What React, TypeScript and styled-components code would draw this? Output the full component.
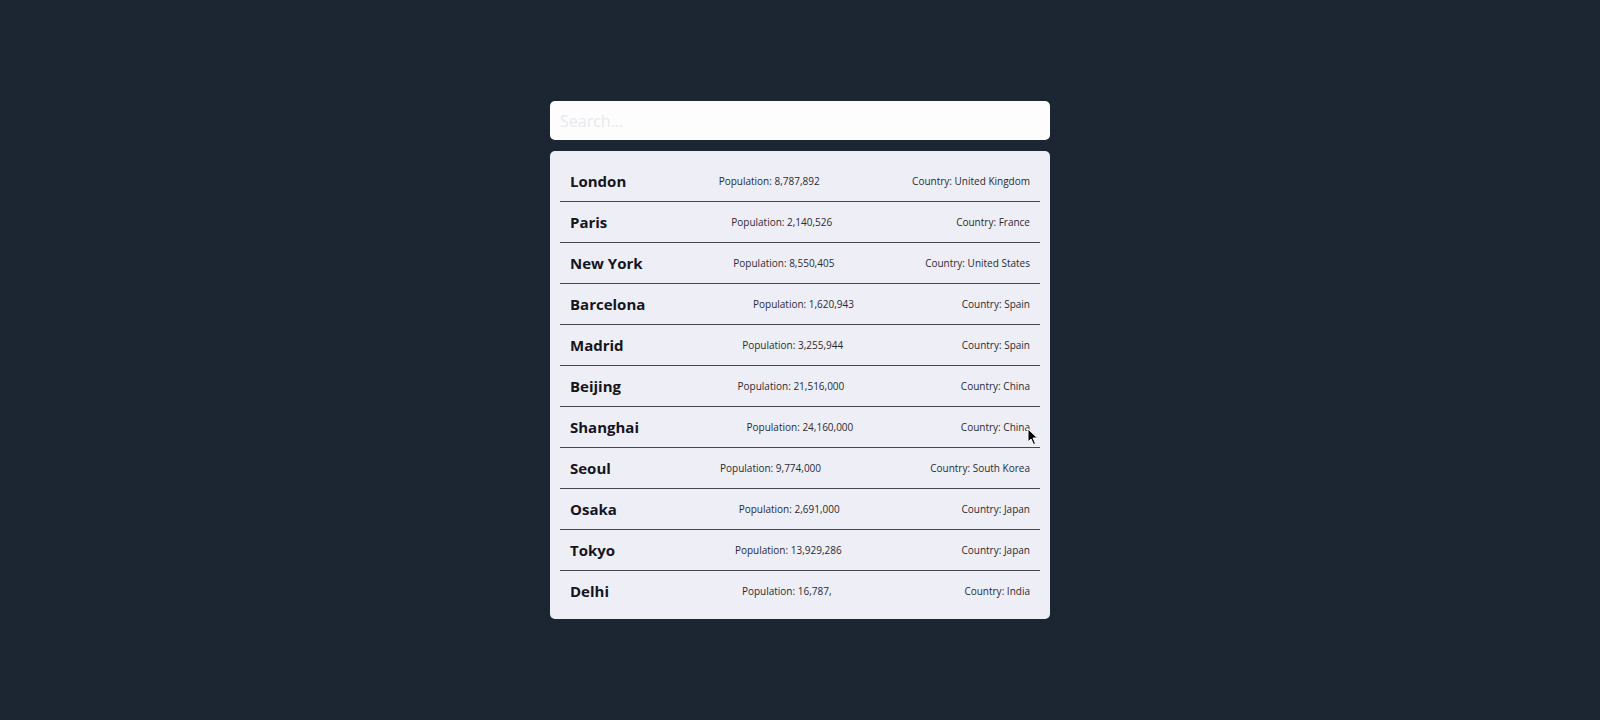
import React from "react";
import styled, { createGlobalStyle } from "styled-components";

const GlobalStyle = createGlobalStyle`
  html, body {
    margin: 0;
    padding: 0;
    background: #1c2632;
    font-family: "Open Sans", "Noto Sans", sans-serif;
  }
`;

const Page = styled.div`
  min-height: 720px;
  box-sizing: border-box;
  padding-top: 101px;
  display: flex;
  justify-content: center;
`;

const Column = styled.div`
  width: 500px;
  display: flex;
  flex-direction: column;
  gap: 11px;
  position: relative;
`;

const SearchInput = styled.input`
  box-sizing: border-box;
  width: 100%;
  height: 39px;
  border: none;
  border-radius: 5px;
  background: #fdfdfd;
  padding: 0 10px;
  font-family: "Open Sans", sans-serif;
  font-size: 16px;
  color: #222;
  outline: none;
  &::placeholder {
    color: #e8e8ee;
  }
`;

const Card = styled.ul`
  list-style: none;
  margin: 0;
  box-sizing: border-box;
  width: 100%;
  padding: 10px 10px 8px;
  background: #eeeef6;
  border-radius: 5px;
`;

const Row = styled.li`
  height: 40px;
  padding: 0 10px;
  display: flex;
  align-items: center;
  justify-content: space-between;
  border-bottom: 1px solid #45454f;
  &:last-child {
    border-bottom: none;
  }
`;

const Name = styled.span`
  font-size: 15px;
  font-weight: 700;
  color: #15151c;
`;

const Info = styled.span`
  font-size: 10px;
  color: #2a2a33;
`;

const Cursor = styled.svg`
  position: absolute;
  left: 477px;
  top: 327px;
  pointer-events: none;
`;

const cities = [
  { name: "London", population: "8,787,892", country: "United Kingdom" },
  { name: "Paris", population: "2,140,526", country: "France" },
  { name: "New York", population: "8,550,405", country: "United States" },
  { name: "Barcelona", population: "1,620,943", country: "Spain" },
  { name: "Madrid", population: "3,255,944", country: "Spain" },
  { name: "Beijing", population: "21,516,000", country: "China" },
  { name: "Shanghai", population: "24,160,000", country: "China" },
  { name: "Seoul", population: "9,774,000", country: "South Korea" },
  { name: "Osaka", population: "2,691,000", country: "Japan" },
  { name: "Tokyo", population: "13,929,286", country: "Japan" },
  { name: "Delhi", population: "16,787,", country: "India" },
];

export default function App() {
  return (
    <>
      <GlobalStyle />
      <Page>
        <Column>
          <SearchInput placeholder="Search..." />
          <Card>
            {cities.map((c) => (
              <Row key={c.name}>
                <Name>{c.name}</Name>
                <Info>Population: {c.population}</Info>
                <Info>Country: {c.country}</Info>
              </Row>
            ))}
          </Card>
          <Cursor width="12" height="18" viewBox="0 0 12 18">
            <path d="M1 1 L1 14 L4 11 L6.5 16.5 L8.5 15.5 L6 10 L10.5 10 Z" fill="#000" stroke="#fff" strokeWidth="1" />
          </Cursor>
        </Column>
      </Page>
    </>
  );
}
